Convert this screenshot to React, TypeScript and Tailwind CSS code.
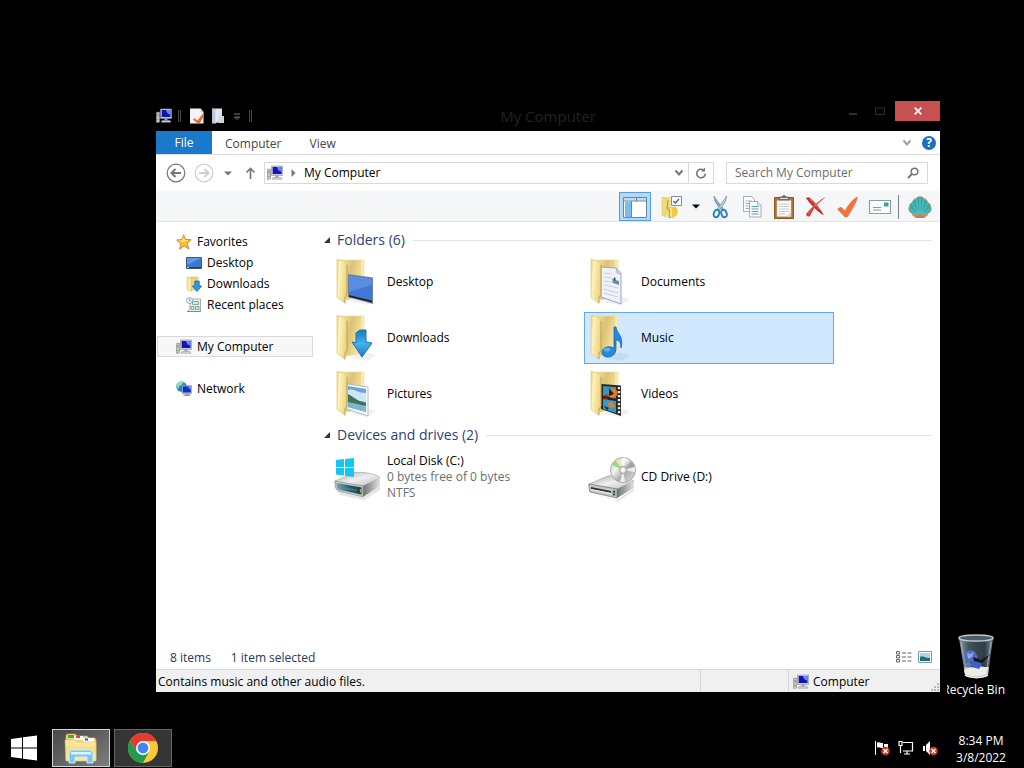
import React from "react";

type IconProps = { className?: string };

function ComputerIcon({ className }: IconProps) {
  return (
    <svg viewBox="0 0 16 16" className={className} aria-hidden="true">
      <path d="M0.5 4.5 3.5 4v10l-3 .5z" fill="#c9cbb8" stroke="#8d9092" strokeWidth=".7" />
      <path d="M1 6.5h2M1 8h2" stroke="#777" strokeWidth=".6" />
      <circle cx="2" cy="11.5" r=".7" fill="#54b23c" />
      <path d="M4.500 1h11v9.500h-11z" fill="#c3cbdc" stroke="#8890a8" strokeWidth=".6" />
      <path d="M5.700 2h8.800v7H5.700z" fill="#1414b4" />
      <path d="M10 2h4.500v4.500C12 6.500 10.500 4.500 10 2z" fill="#6d84f2" />
      <path d="M8.500 10.500h3v2h-3z" fill="#9aa0aa" />
      <path d="M6 12.500h8l1 1.700H5z" fill="#d5d9df" stroke="#868c96" strokeWidth=".5" />
    </svg>
  );
}

function NetworkIcon({ className }: IconProps) {
  return (
    <svg viewBox="0 0 16 16" className={className} aria-hidden="true">
      <circle cx="5.500" cy="5.500" r="5.200" fill="#2a86b8" />
      <path d="M2 2.500c2-2 4-2 5-1L6 4 3.500 5 2 8C0 6 .5 4 2 2.500zM7 4l3 1-1 3-3-1z" fill="#7ee0b4" />
      <path d="M1 3.500C3 .5 7 .5 9 2" stroke="#c4f0f4" fill="none" strokeWidth=".8" />
      <path d="M6 4.500h9.700v8H6z" fill="#b8c4d8" stroke="#667" strokeWidth=".4" />
      <path d="M6.800 5.300h8v6.200h-8z" fill="#1230bc" />
      <path d="M11 5.300h3.800V9z" fill="#6698f6" />
      <path d="M9.500 12.500h3v1h2V15h-7v-1.500h2z" fill="#9098a2" />
    </svg>
  );
}

function StarIcon({ className }: IconProps) {
  return (
    <svg viewBox="0 0 16 16" className={className} aria-hidden="true">
      <path d="m7.600.8 2 4.600 5.600.300-4.100 3.800 1.900 5.500-4.800-3-4.600 3.200 1.200-5.600L.6 6.100l5.200-.7z" fill="#ffc02e" stroke="#d88a39" strokeWidth="1" strokeLinejoin="round" />
      <path d="m7.600 2.800 1.200 3.300 3.700.2L6 8.200 2.800 6.800l3.500-.6z" fill="#ffe77a" />
    </svg>
  );
}

function MiniDesktopIcon({ className }: IconProps) {
  return (
    <svg viewBox="0 0 16 16" className={className} aria-hidden="true">
      <path d="M.5 2.500h15v11H.5z" fill="#3b78cf" stroke="#42566e" />
      <path d="M1 3h14L1 10z" fill="#75aaf0" opacity=".65" />
      <path d="M1 12h14v1H1z" fill="#234069" />
      <path d="M1 12h2v1H1z" fill="#9fd1ff" />
    </svg>
  );
}

function MiniDownloadsIcon({ className }: IconProps) {
  return (
    <svg viewBox="0 0 16 16" className={className} aria-hidden="true">
      <path d="M4 1h8v13H4z" fill="#edd580" stroke="#d8bd60" strokeWidth=".6" />
      <path d="M1 .8 5.500 2.500v13L1 13.500z" fill="#f9e9a4" stroke="#d6bc62" strokeWidth=".6" />
      <path d="M8.800 5h4.400v5h2.500L11 15.500 6.300 10h2.500z" fill="#2d9be0" stroke="#1668a8" strokeWidth=".8" />
    </svg>
  );
}

function RecentIcon({ className }: IconProps) {
  return (
    <svg viewBox="0 0 16 16" className={className} aria-hidden="true">
      <path d="M4 2h10.500v12.500H1.500L4 12z" fill="#eef3f3" stroke="#8f9a9c" strokeWidth=".8" />
      <path d="M6.500 4.500h6v3h-6zM5 9.500h3v3H5zM9.500 9.500H13v3H9.500z" fill="#d3ebe5" stroke="#69988f" strokeWidth=".8" />
      <circle cx="3.500" cy="3.500" r="3" fill="#f5f8fa" stroke="#8a979f" strokeWidth=".8" />
      <path d="M3.500 1.800v2h1.500" fill="none" stroke="#59666e" strokeWidth=".7" />
      <path d="M1 14.500h14" stroke="#7f8789" />
    </svg>
  );
}

type FolderKind = "desktop" | "documents" | "downloads" | "music" | "pictures" | "videos";

function FolderContents({ kind }: { kind: FolderKind }) {
  switch (kind) {
    case "desktop":
      return (
        <g>
          <path d="m14 16 25 3.500V46L14 39z" fill="#6e8298" />
          <path d="m15 17.500 23 3.200V42L15 36.500z" fill="#3f78d8" />
          <path d="m15 17.500 23 3.200v6L15 34z" fill="#6fa3f0" opacity=".5" />
          <path d="m15 37 23 5.500v2L15 39z" fill="#1b2736" />
        </g>
      );
    case "documents":
      return (
        <g>
          <path d="m13 9 15 1 5 5v31l-20-7z" fill="#f0f2fb" stroke="#8f9cb2" strokeWidth=".9" />
          <path d="m28 10 1 5 4 1" fill="#d4ddec" stroke="#9aa8bf" strokeWidth=".8" />
          <path d="m16 15 8 1M16 19l8 1M16 23l14 2M16 27l14 3M16 31l14 4M16 35l14 4" stroke="#cfc7e2" strokeWidth="1" />
          <path d="m24 21 7 2v4l-6-2z" fill="#5e93a5" />
          <path d="m25 21 2-2 1 4z" fill="#334e7c" />
        </g>
      );
    case "downloads":
      return (
        <path d="m22 19 4-3h6v12l6 1-10 14-10-15 4 1z" fill="url(#arrowBlue)" stroke="#1e6fab" strokeWidth="1" strokeLinejoin="round" />
      );
    case "music":
      return (
        <g fill="#2589df" stroke="#1761a8" strokeWidth=".8">
          <path d="M26 13h2c1 7 8 9 5 21 0-6-2-8-5-8v9c0 5-4 8-8 8s-6-2-6-5 4-6 9-5l3 1z" />
          <ellipse cx="19" cy="35.500" rx="3.500" ry="2" fill="#6ac1fa" stroke="none" opacity=".7" />
        </g>
      );
    case "pictures":
      return (
        <g>
          <path d="m13 14 21 3v29l-21-7z" fill="#f6f9fa" stroke="#a9b7bf" strokeWidth=".9" />
          <path d="m14 16 18 3v23l-18-5z" fill="#6ba5da" />
          <path d="M14 20c6-2 8 3 18 3v9l-18-3z" fill="#cfe6f5" />
          <path d="M14 24c5 2 8 7 18 9v3l-18-3z" fill="#3f7358" />
          <path d="m14 32 18 4v6l-18-5z" fill="#7ab7d3" />
        </g>
      );
    case "videos":
      return (
        <g>
          <path d="m13 14 20 1.500V46l-20-7z" fill="#252525" />
          <path d="m15 16 13 1v11.500L15 27zM15 29l13 2v12l-13-4z" fill="#3298ca" />
          <circle cx="25" cy="23" r="4.500" fill="#e57b22" />
          <circle cx="18" cy="27" r="2.800" fill="#ba392d" />
          <path d="m21 18 5 6-5 2zM15 26l7 1 1 2-8-1z" fill="#351c18" />
          <path d="m19 34 5-3 3 6-5 1z" fill="#df8126" />
          <path d="m16 36 5 2-2 2z" fill="#20201f" />
          <path d="M31 17v28" stroke="#e6e9e5" strokeWidth="2.400" strokeDasharray="2.200 1.800" />
        </g>
      );
  }
}

function FolderIcon({ kind }: { kind: FolderKind }) {
  return (
    <svg viewBox="0 0 48 48" className="size-12 shrink-0" aria-hidden="true">
      <path d="m26 37 16 4-8 6-18-3z" fill="#000" opacity=".06" />
      <path d="M5 2h25v37l-18 3z" fill="url(#folderBack)" stroke="#eadba2" strokeWidth=".7" />
      <path d="M27 2h3v37h-3z" fill="#fff4bd" opacity=".5" />
      <FolderContents kind={kind} />
      <path d="M3 1.500c2 0 9 2.500 10 4.500v30l-2 3v6.500L3 39z" fill="url(#folderFront)" stroke="#e2cb80" strokeWidth=".8" />
      <path d="M13 7v29l-2 3v6" fill="none" stroke="#a48846" strokeWidth=".9" opacity=".7" />
    </svg>
  );
}

function SharedGradients() {
  return (
    <svg className="absolute size-0" aria-hidden="true">
      <defs>
        <linearGradient id="folderBack" x1="0" x2="1" y1="0" y2=".4">
          <stop offset="0" stopColor="#f8edb8" />
          <stop offset=".5" stopColor="#dcc272" />
          <stop offset="1" stopColor="#f7e9ac" />
        </linearGradient>
        <linearGradient id="folderFront" x1="0" x2="1" y1="0" y2=".3">
          <stop offset="0" stopColor="#e9cf7c" />
          <stop offset=".3" stopColor="#fdf2bd" />
          <stop offset="1" stopColor="#eed47f" />
        </linearGradient>
        <linearGradient id="arrowBlue" x1="0" x2="0" y1="0" y2="1">
          <stop offset="0" stopColor="#1c75b8" />
          <stop offset=".5" stopColor="#43b2ef" />
          <stop offset="1" stopColor="#1879c6" />
        </linearGradient>
        <linearGradient id="metalTop" x1="0" x2="1" y1="0" y2="1">
          <stop offset="0" stopColor="#a9abad" />
          <stop offset=".5" stopColor="#efefef" />
          <stop offset="1" stopColor="#b9bbbd" />
        </linearGradient>
        <linearGradient id="metalSide" x1="0" x2="1" y1="0" y2="0">
          <stop offset="0" stopColor="#707173" />
          <stop offset="1" stopColor="#e0e1e2" />
        </linearGradient>
        <linearGradient id="driveFace" x1="0" x2="1" y1="0" y2="0">
          <stop offset="0" stopColor="#8ba1ab" />
          <stop offset=".5" stopColor="#27606c" />
          <stop offset="1" stopColor="#2a3439" />
        </linearGradient>
        <linearGradient id="discShine" x1="0" x2="1" y1="0" y2="1">
          <stop offset="0" stopColor="#c8c8c8" />
          <stop offset=".35" stopColor="#f4f4f4" />
          <stop offset=".6" stopColor="#adadad" />
          <stop offset="1" stopColor="#e3e3e3" />
        </linearGradient>
        <linearGradient id="binGlass" x1="0" x2="1" y1="0" y2="0">
          <stop offset="0" stopColor="#a3b4bf" />
          <stop offset=".3" stopColor="#4d5e6a" />
          <stop offset=".75" stopColor="#384652" />
          <stop offset="1" stopColor="#94a6b3" />
        </linearGradient>
      </defs>
    </svg>
  );
}

function LocalDiskIcon() {
  return (
    <svg viewBox="0 0 48 48" className="size-12 shrink-0" aria-hidden="true">
      <path d="m5 39 24 6 17-12v4L30 47 6 42z" fill="#000" opacity=".1" />
      <path d="M1 28 21 19.500c5-1 21 1 25 5L30 33 1 30z" fill="url(#metalTop)" stroke="#999" strokeWidth=".6" />
      <path d="m29 33 17-8.500V33L29 44z" fill="url(#metalSide)" />
      <path d="m1 28 28 5v11L4 38c-3-2-3-6-3-10z" fill="#bfc3c5" stroke="#8f9496" strokeWidth=".7" />
      <path d="m2.500 30 25 4.500v7L5 36.500c-2-1-2.500-4-2.500-6.500z" fill="url(#driveFace)" />
      <path d="m4 33 19 3.500v2L5 35z" fill="#4b9db0" opacity=".5" />
      <path d="M26.500 36v3.500" stroke="#72d850" strokeWidth="1.300" />
      <path d="m2 7 8-1v8H2zM11 6l9-1v9h-9zM2 15h8v7.500l-8-1zM11 15h9v9l-9-1.300z" fill="#12c7f4" />
    </svg>
  );
}

function CdDriveIcon() {
  return (
    <svg viewBox="0 0 48 48" className="size-12 shrink-0" aria-hidden="true">
      <path d="m5 41 24 6 17-11v2L30 48z" fill="#000" opacity=".12" />
      <path d="M1 31 20 23c7-1 23 3 26 5L29 36 1 33z" fill="url(#metalTop)" stroke="#999" strokeWidth=".6" />
      <circle cx="35" cy="17" r="12.500" fill="url(#discShine)" stroke="#9c9c9c" strokeWidth=".8" />
      <path d="M35 17 24 12c0-2 2-3 4-4z" fill="#8fd65d" opacity=".85" />
      <path d="m35 17-7-9 4-2z" fill="#e3e7a1" opacity=".7" />
      <path d="m35 17-1-12 4-.5zM35 17l12-3v5zM35 17l2 12h-5z" fill="#fff" opacity=".75" />
      <path d="m35 17 8-9 3 5z" fill="#8f8f8f" opacity=".45" />
      <circle cx="35" cy="17" r="3.500" fill="#e8e8e8" stroke="#9c9c9c" />
      <circle cx="35" cy="17" r="1.500" fill="#fff" />
      <path d="m29 36 17-8v7L29 45z" fill="url(#metalSide)" />
      <path d="m1 31 28 5v9L2 39c-1-2-1-5-1-8z" fill="#c5c6c7" stroke="#777" strokeWidth=".8" />
      <path d="m3 34 20 4v2L3 36z" fill="#333" />
      <path d="m3 36.500 20 4" stroke="#f6f6f6" />
      <path d="M26 37.500v5" stroke="#275c2b" strokeWidth="2.500" />
      <path d="M26 39v2" stroke="#62d14d" strokeWidth="1.200" />
    </svg>
  );
}

function RecycleBinIcon() {
  return (
    <svg viewBox="0 0 40 48" className="h-12 w-10" aria-hidden="true">
      <path d="M3 5h34l-5 37c-4 4-19 4-23 0z" fill="url(#binGlass)" opacity=".85" />
      <path d="M8 34h25l-1 8c-4 4-19 4-23 0z" fill="#b9bdbc" />
      <path d="M8 37c6-4 9-1 13-3s7 1 11 0l-1 7c-7 3-16 3-22 0z" fill="#eeeee6" />
      <path d="m9 19 5-2 5 2 3 5-5 5-8-1-3-3z" fill="#526cbb" />
      <path d="m11 20 4 1 3-3-2 6-4 2z" fill="#8ea5e6" />
      <path d="m9 31 4-3 3 4-4 3z" fill="#6178c0" />
      <path d="m16 29 5-2 5 4-3 5-7-2z" fill="#3f5fd0" />
      <path d="m17 24 8 3 11-7-10 10-8-2z" fill="#101722" />
      <path d="M5 9 11 41M35 9l-5 32" stroke="#d5e2e8" strokeWidth="1" opacity=".5" />
      <ellipse cx="20" cy="5" rx="17" ry="3" fill="#4b5d69" stroke="#bac5cb" strokeWidth="1.500" />
      <path d="M9 42c5 3.500 18 3.500 23 0" stroke="#eee" strokeWidth="1.500" fill="none" />
    </svg>
  );
}

function Triangle({ className }: IconProps) {
  return (
    <svg viewBox="0 0 8 5" className={className} aria-hidden="true">
      <path d="M0 .5h8L4 4.500z" fill="currentColor" />
    </svg>
  );
}

function Chevron({ className }: IconProps) {
  return (
    <svg viewBox="0 0 10 8" className={className} aria-hidden="true">
      <path d="m1.500 1.500 3.500 4 3.500-4" fill="none" stroke="currentColor" strokeWidth="2" />
    </svg>
  );
}

function CircleArrow({ flip, className }: { flip?: boolean; className?: string }) {
  return (
    <svg viewBox="0 0 20 20" className={className} aria-hidden="true">
      <circle cx="10" cy="10" r="8.800" fill="none" stroke="currentColor" strokeWidth="1.200" />
      <path d={flip ? "M5 10h9M10.500 6 14.500 10l-4 4" : "M15 10H6M9.500 6 5.500 10l4 4"} fill="none" stroke="currentColor" strokeWidth="2" />
    </svg>
  );
}

function TitleBar() {
  return (
    <header className="relative flex h-[30px] shrink-0 items-center justify-between">
      <div className="flex items-center">
        <ComputerIcon className="size-4" />
        <span className="ml-1.5 h-3 w-[3px] border-x border-[#4b4b4b]" />
        <button aria-label="Properties" className="ml-2">
          <svg viewBox="0 0 16 16" className="size-4">
            <path d="M1 .5h10.500L14.500 4v11.500H1z" fill="#f4f4f6" />
            <path d="M11.500.5V4h3" fill="#c9cdd2" />
            <path d="m5 10 3.500 2.500L14 5.500l1 1.500-4 8H8L4 11.500z" fill="#e06c34" />
          </svg>
        </button>
        <button aria-label="New folder" className="ml-1.5">
          <svg viewBox="0 0 16 16" className="size-4">
            <path d="M1 .5h10v14H1z" fill="#dde3ec" />
            <path d="m1 .5 4 1v14H1z" fill="#bcc8d8" />
            <path d="M9.500 8H13v7H7v-3z" fill="#cdd5e0" />
            <path d="M5 2v13" stroke="#f6f8fb" />
          </svg>
        </button>
        <button aria-label="Customize Quick Access Toolbar" className="ml-1.5">
          <svg viewBox="0 0 8 10" className="h-2.5 w-2">
            <path d="M1 3h6M1.500 6h5L4 8.500z" fill="none" stroke="#888" strokeWidth=".9" />
          </svg>
        </button>
        <span className="ml-2 h-3 w-[3px] border-x border-[#444444]" />
      </div>
      <h1 className="absolute inset-x-0 top-1 mx-auto w-fit text-[15px] leading-[22px] text-[#222222]">My Computer</h1>
      <div className="flex h-5 self-start text-[#303030]">
        <button aria-label="Minimize" className="flex w-6 items-center justify-center">
          <svg viewBox="0 0 8 8" className="size-2"><path d="M0 7h8" stroke="currentColor" strokeWidth="2" /></svg>
        </button>
        <button aria-label="Maximize" className="flex w-[30px] items-center justify-center">
          <svg viewBox="0 0 10 8" className="h-2 w-2.5"><path d="M.5 1h9v6.500h-9z" fill="none" stroke="currentColor" /></svg>
        </button>
        <button aria-label="Close" className="flex w-[45px] items-center justify-center bg-[#c75050]">
          <svg viewBox="0 0 8 8" className="size-2"><path d="m.7.700 6.600 6.600M7.300.700.7 7.300" stroke="#fff" strokeWidth="1.700" /></svg>
        </button>
      </div>
    </header>
  );
}

function RibbonTabs() {
  return (
    <nav className="flex h-6 shrink-0 items-center border-b border-[#dadbdc] bg-white text-[#444444]">
      <button className="h-full w-14 bg-[#1979ca] text-white">File</button>
      <button className="ml-[13px] pt-0.5">Computer</button>
      <button className="ml-7 pt-0.5">View</button>
      <button aria-label="Expand the Ribbon" className="ml-auto text-[#a0a0a0]">
        <Chevron className="h-2 w-2.5" />
      </button>
      <button aria-label="Help" className="mr-1 ml-2.5 flex size-[14px] items-center justify-center rounded-full bg-[#1b6fc4] text-[12px] leading-none font-bold text-white">?</button>
    </nav>
  );
}

function AddressRow() {
  return (
    <div className="flex h-9 shrink-0 items-center bg-white pr-3 pl-2.5">
      <button aria-label="Back"><CircleArrow className="size-5 text-[#777777]" /></button>
      <button aria-label="Forward" className="ml-2"><CircleArrow flip className="size-5 text-[#cfcfcf]" /></button>
      <button aria-label="Recent locations" className="ml-2.5 text-[#777777]"><Triangle className="h-[5px] w-2" /></button>
      <button aria-label="Up" className="ml-3">
        <svg viewBox="0 0 12 14" className="h-3.5 w-3"><path d="M6.500 13V2.500M2.500 6.500l4-4 4 4" fill="none" stroke="#777" strokeWidth="1.700" /></svg>
      </button>
      <div className="ml-2 flex h-[22px] flex-1 items-center border border-[#d9d9d9] pl-0.5">
        <ComputerIcon className="size-4" />
        <svg viewBox="0 0 5 8" className="ml-2 h-2 w-[5px]" aria-hidden="true"><path d="M.5 0v8L4.500 4z" fill="#777" /></svg>
        <button className="ml-2 text-black">My Computer</button>
        <button aria-label="Previous locations" className="mr-1 ml-auto text-[#777777]"><Chevron className="h-2 w-2.5" /></button>
        <button aria-label="Refresh" className="flex h-full w-[25px] items-center justify-center border-l border-[#d9d9d9]">
          <svg viewBox="0 0 12 12" className="size-3"><path d="M8.500 3A4.300 4.300 0 1 0 10.300 6.500" fill="none" stroke="#777" strokeWidth="1.600" /><path d="M6 4.500h4V.5z" fill="#777" /></svg>
        </button>
      </div>
      <label className="ml-3 flex h-[22px] w-[202px] items-center border border-[#d9d9d9] px-2">
        <input aria-label="Search My Computer" placeholder="Search My Computer" className="min-w-0 flex-1 bg-transparent outline-none placeholder:text-[#6d6d6d]" />
        <svg viewBox="0 0 12 12" className="size-3" aria-hidden="true"><circle cx="7.500" cy="4.500" r="3.300" fill="none" stroke="#777" strokeWidth="1.500" /><path d="M5 7 1 11" stroke="#777" strokeWidth="2" /></svg>
      </label>
    </div>
  );
}

const tools: { label: string; art: React.ReactNode }[] = [
  {
    label: "Cut",
    art: (
      <g>
        <path d="M6 1c0 5 3 9 7.500 14l1.500-1.500C12 9 8 5 6 1z" fill="#89a9bf" stroke="#5b7f9b" strokeWidth=".6" />
        <path d="M18.500 1c0 5-3 9-7.500 14l-1.500-1.500C12.500 9 16.500 5 18.500 1z" fill="#b9cfdd" stroke="#5b7f9b" strokeWidth=".6" />
        <ellipse cx="8.500" cy="18.500" rx="2.600" ry="3.800" fill="none" stroke="#2583b7" strokeWidth="1.900" transform="rotate(20 8.500 18.500)" />
        <ellipse cx="16" cy="18.500" rx="2.600" ry="3.800" fill="none" stroke="#2583b7" strokeWidth="1.900" transform="rotate(-20 16 18.500)" />
      </g>
    ),
  },
  {
    label: "Copy",
    art: (
      <g fill="#fbfcfd" stroke="#9aa6b0" strokeWidth=".9">
        <path d="M3.500 1.500h8l3 3v12h-11z" />
        <path d="M5.500 6h6M5.500 8.500h6M5.500 11h6M5.500 13.500h6" />
        <path d="M9.500 6.500h8l3.500 3.500v12H9.500z" />
        <path d="M17.500 6.500V10H21" />
        <path d="M11.500 11.500h7M11.500 14h7M11.500 16.500h7M11.500 19h7" stroke="#4b9ab5" />
      </g>
    ),
  },
  {
    label: "Paste",
    art: (
      <g>
        <path d="M2.500 2.500h19v21h-19z" fill="#b87333" stroke="#8e5527" />
        <path d="M5 5.500h14v16H5z" fill="#fcfcfa" stroke="#d9c6a9" strokeWidth=".6" />
        <path d="M7 9h10M7 11.500h10M7 14h10M7 16.500h10M7 19h6" stroke="#b5bdc2" strokeWidth=".8" />
        <path d="M14 21.500h5v-5z" fill="#d4dade" />
        <path d="M7 2h3c0-2 4-2 4 0h3v3H7z" fill="#6f787d" stroke="#4f575b" strokeWidth=".6" />
        <path d="M8 3.500h8" stroke="#e0e4e6" />
      </g>
    ),
  },
  {
    label: "Delete",
    art: (
      <g>
        <path d="M2 3c2-1 3-1 4 0 6 5 11 12 14 17l-2.500-1C12 15 6 9 2 3z" fill="#c22e24" />
        <path d="M22 2C15 5 7 13 2 19c1 3 3 3 4 2 3-7 9-14 16-19z" fill="#d93a2b" />
        <path d="M5 4c5 4 8 7 10 11M18 5C12 9 7 14 4 19" stroke="#f08873" fill="none" strokeWidth=".7" />
      </g>
    ),
  },
  {
    label: "Properties",
    art: <path d="M1.500 14 5 12l4 4C12 10 16 5 21 2h.5c-1 6-6 13-9 18.500-1.500 2-4 2-5 0z" fill="#f0743c" stroke="#df6d3b" strokeWidth=".5" />,
  },
  {
    label: "E-mail",
    art: (
      <g>
        <path d="M1.500 5.500h21v13h-21z" fill="#fbfcfc" stroke="#909ba2" strokeWidth="1.200" />
        <path d="M16 7.500h4.500v4H16z" fill="#3ca2a5" />
        <path d="M5 12.500h8M5 15h8" stroke="#8a969c" />
      </g>
    ),
  },
];

function Toolbar() {
  return (
    <div className="flex h-[31px] shrink-0 items-end justify-end border-b border-[#e2e5e8] bg-[#f5f6f7] pr-1" role="toolbar">
      <button aria-label="Navigation pane" aria-pressed="true" className="mr-[5px] flex h-[29px] w-8 items-center justify-center border border-[#569de5] bg-[#b5d8f7]">
        <svg viewBox="0 0 24 24" className="size-6">
          <path d="M.5 2.500h23v20H.5z" fill="#fff" stroke="#6385a6" />
          <path d="M1 3h22v2.500H1z" fill="#c4d9ec" />
          <path d="M1 6h22" stroke="#6385a6" />
          <path d="M2 7h6v15H2z" fill="#7bbcee" />
          <path d="M8.500 6v16M13.500 2.500v4" stroke="#6385a6" />
        </svg>
      </button>
      <button aria-label="Folder options" className="flex h-[29px] w-8 items-center justify-center">
        <svg viewBox="0 0 24 24" className="size-6">
          <path d="M3 2h8v18l-4 2z" fill="#f2df93" />
          <path d="m2 2 6 2v9l-2 2v7l-4-2z" fill="#f1da77" stroke="#d8bd60" strokeWidth=".5" />
          <path d="M8 12h8c2 1 2 7 1 8l-4 3H8z" fill="#ecca4c" />
          <path d="m8 5-1 9 3 2v7" stroke="#b59434" fill="none" />
          <path d="M11 13v9" stroke="#fbedaa" strokeWidth="1.500" />
          <path d="M11.500 1.500h10v9h-10z" fill="#f9fafc" stroke="#7b8ea4" />
          <path d="m13.500 6 2 2 3.500-4" fill="none" stroke="#42658e" strokeWidth="1.300" />
        </svg>
      </button>
      <button aria-label="More folder options" className="flex h-[29px] w-4 items-center justify-center text-black"><Triangle className="h-[5px] w-2" /></button>
      {tools.map((tool) => (
        <button key={tool.label} aria-label={tool.label} className="flex h-[29px] w-8 items-center justify-center">
          <svg viewBox="0 0 24 24" className="size-6">{tool.art}</svg>
        </button>
      ))}
      <span className="mb-0.5 ml-0.5 h-6 w-px bg-[#777d83]" />
      <button aria-label="Shell settings" className="ml-[5px] flex h-[29px] w-8 items-center justify-center">
        <svg viewBox="0 0 24 24" className="size-6">
          <path d="M5 16h14l1 4-4 3H8l-4-3z" fill="#c98a5c" />
          <path d="M12 1.500c2 0 3 1 4 2 2 0 3 2 4 4 2 1 3 3 3 5 1 3-1 5-3 6l-5 1-3 2-3-2-5-1c-2-1-4-3-3-6 0-2 1-4 3-5 1-2 2-4 4-4 1-1 2-2 4-2z" fill="#35a9ab" stroke="#d6a272" strokeWidth=".9" />
          <path d="M12 20V3M11 19 8 4M13 19l3-15M10 19 4 8M14 19l6-11M9 19l-7-5M15 19l7-5" stroke="#68c8c4" strokeWidth=".8" />
          <path d="M7 20c2 1 8 1 10 0l-1 3H8z" fill="#cf7a50" />
        </svg>
      </button>
    </div>
  );
}

function Sidebar() {
  return (
    <aside className="w-[158px] shrink-0 pt-[9px] pl-px">
      <ul className="text-black">
        <li><a href="#favorites" className="flex h-[21px] items-center gap-[5px] pl-[19px]"><StarIcon className="size-4" />Favorites</a></li>
        <li><a href="#desktop" className="flex h-[21px] items-center gap-[5px] pl-[29px]"><MiniDesktopIcon className="size-4" />Desktop</a></li>
        <li><a href="#downloads" className="flex h-[21px] items-center gap-[5px] pl-[29px]"><MiniDownloadsIcon className="size-4" />Downloads</a></li>
        <li><a href="#recent" className="flex h-[21px] items-center gap-[5px] pl-[29px]"><RecentIcon className="size-4" />Recent places</a></li>
        <li className="mt-[21px]"><a href="#computer" aria-current="page" className="flex h-[21px] w-[156px] items-center gap-[5px] border border-[#dadada] bg-[#f7f7f7] pl-[18px]"><ComputerIcon className="size-4" />My Computer</a></li>
        <li className="mt-[21px]"><a href="#network" className="flex h-[21px] items-center gap-[5px] pl-[19px]"><NetworkIcon className="size-4" />Network</a></li>
      </ul>
    </aside>
  );
}

function GroupHeader({ title }: { title: string }) {
  return (
    <h2 className="mb-1.5 flex h-5 items-center text-[14px] leading-5 text-[#2f4178]">
      <svg viewBox="0 0 8 8" className="mr-1.5 size-2" aria-hidden="true"><path d="M7 1v6H1z" fill="#333" /></svg>
      {title}
      <span className="ml-2 h-px flex-1 bg-[#e2e3ea]" />
    </h2>
  );
}

function Tile({ icon, name, details, selected }: { icon: React.ReactNode; name: string; details?: string[]; selected?: boolean }) {
  return (
    <li>
      <button
        aria-pressed={selected ? true : false}
        className={
          selected
            ? "flex h-[52px] w-full items-center gap-[5px] border border-[#66a7e8] bg-[#d1e8ff] pl-[3px] text-left leading-4"
            : "flex h-[52px] w-full items-center gap-[5px] border border-transparent pl-[3px] text-left leading-4"
        }
      >
        {icon}
        <span className="flex flex-col text-black">
          {name}
          {details?.map((line) => <span key={line} className="text-[#6d6d6d]">{line}</span>)}
        </span>
      </button>
    </li>
  );
}

const folders: { name: string; kind: FolderKind; selected?: boolean }[] = [
  { name: "Desktop", kind: "desktop" },
  { name: "Documents", kind: "documents" },
  { name: "Downloads", kind: "downloads" },
  { name: "Music", kind: "music", selected: true },
  { name: "Pictures", kind: "pictures" },
  { name: "Videos", kind: "videos" },
];

function FilePane() {
  return (
    <main className="min-w-0 flex-1 overflow-hidden pt-2 pr-2 pl-[9px]">
      <section>
        <GroupHeader title="Folders (6)" />
        <ul className="ml-[7px] grid grid-cols-[repeat(auto-fill,250px)] gap-1">
          {folders.map((folder) => (
            <Tile key={folder.name} name={folder.name} selected={folder.selected} icon={<FolderIcon kind={folder.kind} />} />
          ))}
        </ul>
      </section>
      <section className="mt-[5px]">
        <GroupHeader title="Devices and drives (2)" />
        <ul className="ml-[7px] grid grid-cols-[repeat(auto-fill,250px)] gap-1">
          <Tile name="Local Disk (C:)" details={["0 bytes free of 0 bytes", "NTFS"]} icon={<LocalDiskIcon />} />
          <Tile name="CD Drive (D:)" icon={<CdDriveIcon />} />
        </ul>
      </section>
    </main>
  );
}

function StatusBars() {
  return (
    <footer className="shrink-0 bg-white">
      <div className="flex h-6 items-center pr-2 pl-3.5 text-[#1e395b]">
        <span className="pt-0.5">8 items</span>
        <span className="ml-5 pt-0.5">1 item selected</span>
        <button aria-label="Details view" className="ml-auto">
          <svg viewBox="0 0 16 12" className="h-3 w-4">
            <path d="M.5.500h3v2.500h-3zM.5 4.500h3V7h-3zM.5 8.500h3V11h-3z" fill="none" stroke="#666" />
            <path d="M6 2h4M11.500 2h4M6 6h4M11.500 6h4M6 10h4M11.500 10h4" stroke="#666" />
          </svg>
        </button>
        <button aria-label="Large icons view" className="ml-1.5">
          <svg viewBox="0 0 14 12" className="h-3 w-3.5">
            <path d="M.5.500h13v11H.5z" fill="#fff" stroke="#6ea1b4" />
            <path d="M2 2h10v8H2z" fill="#a9d8ec" />
            <path d="M2 6c2-2 4 1 10 1v3H2z" fill="#2b6a73" />
          </svg>
        </button>
      </div>
      <div className="flex h-[23px] items-center border-t border-[#d7d7d7] bg-[#f0f0f0] text-black">
        <span className="flex-1 pt-0.5 pl-0.5">Contains music and other audio files.</span>
        <span className="h-full w-[88px] border-l border-[#d7d7d7]" />
        <span className="flex h-full w-[152px] items-center justify-between border-l border-[#d7d7d7] pl-1">
          <span className="flex items-center gap-1 pt-0.5"><ComputerIcon className="size-4" />Computer</span>
          <svg viewBox="0 0 10 10" className="size-2.5 self-end" aria-hidden="true">
            <path d="M7 1h2v2H7zM4 4h2v2H4zM7 4h2v2H7zM1 7h2v2H1zM4 7h2v2H4zM7 7h2v2H7z" fill="#b9b9b9" />
          </svg>
        </span>
      </div>
    </footer>
  );
}

function ErrorBadge() {
  return (
    <g>
      <circle cx="11.500" cy="11" r="4.300" fill="#d83429" />
      <path d="m9.500 9 4 4M13.500 9l-4 4" stroke="#fff" strokeWidth="1.400" />
    </g>
  );
}

function Taskbar() {
  return (
    <footer className="flex h-10 shrink-0 items-center bg-black">
      <button aria-label="Start" className="flex h-full w-12 items-center justify-center">
        <svg viewBox="0 0 26 26" className="size-[26px]"><path d="m0 4 11-1.500v10H0zM12 2.300 26 .500v12H12zM0 13.500h11v10L0 22zM12 13.500h14v12l-14-1.800z" fill="#fff" /></svg>
      </button>
      <button aria-label="File Explorer" className="ml-1 flex h-[38px] w-[58px] items-center justify-center border border-[#d5d5d5] bg-linear-to-br from-[#494949] to-[#7d7d7d]">
        <svg viewBox="0 0 34 32" className="h-8 w-[34px]">
          <path d="M2 4c0-2 2-2 4-2h5l2 2h10l2 2h6l1 2v20H2z" fill="#efd374" stroke="#d8b651" strokeWidth=".6" />
          <path d="M4 3h6v3H4z" fill="#49a550" />
          <path d="M10 4h9v4h-9zM19 6h11v4H19z" fill="#fafafa" />
          <path d="M12 4h4v2h-4z" fill="#d9472d" />
          <path d="M21 6.500h3v2h-3z" fill="#3a5ba5" />
          <path d="M1 8h10l3 2h18v19H2z" fill="#f8e7a0" stroke="#dfc365" strokeWidth=".6" />
          <path d="M2 14h30v8H2z" fill="#f3d97b" opacity=".55" />
          <path d="M7 18h20l2 3v10h-6v-6H11v6H5V21z" fill="#7cc6ee" stroke="#c8efff" />
          <path d="M7 20h20v2.500H7z" fill="#d8f5ff" />
        </svg>
      </button>
      <button aria-label="Google Chrome" className="ml-1 flex h-[38px] w-[58px] items-center justify-center border border-[#666666] bg-[#353535]">
        <svg viewBox="0 0 30 30" className="size-[30px]">
          <circle cx="15" cy="15" r="15" fill="#fbc934" />
          <path d="M15 8h13.300A15 15 0 0 0 2 7.500l7 11z" fill="#e33b2e" />
          <path d="M2 7.500a15 15 0 0 0 13 22.500l6-11.500-6 3.500-6-3.500z" fill="#229a50" />
          <circle cx="15" cy="15" r="7" fill="#fff" />
          <circle cx="15" cy="15" r="5.400" fill="#4285f4" />
        </svg>
      </button>
      <div className="ml-auto flex items-center gap-2">
        <button aria-label="Action Center">
          <svg viewBox="0 0 16 16" className="size-4"><path d="M1.500 1v14" stroke="#fff" /><path d="M3 2.500c3-1 4 1 6 .5v5c-2 .5-3-1.500-6-.5zM10 4h4v4h-4z" fill="#fff" /><ErrorBadge /></svg>
        </button>
        <button aria-label="Network">
          <svg viewBox="0 0 16 16" className="size-4" fill="none" stroke="#fff" strokeWidth="1.200"><path d="M5 2.500h9.500V11H5M9 11v3M6 14h6M2.500 6v7" /><path d="M1 1.500h3v4H1z" /></svg>
        </button>
        <button aria-label="Volume">
          <svg viewBox="0 0 16 16" className="size-4"><path d="M1 6h2v5H1zM4 5l4-4v14l-4-4z" fill="#fff" /><ErrorBadge /></svg>
        </button>
      </div>
      <time dateTime="2022-03-08T20:34" className="mr-3 ml-3 flex w-[62px] flex-col pt-0.5 text-center leading-[17px] text-white">
        <span>8:34 PM</span>
        <span>3/8/2022</span>
      </time>
    </footer>
  );
}

export default function App() {
  return (
    <div className="relative flex min-h-screen flex-col overflow-hidden bg-black font-['Open_Sans','Noto_Sans',sans-serif] text-[12px] leading-4">
      <SharedGradients />
      <div className="flex flex-1 pt-[101px] pr-[84px] pb-9 pl-[156px]">
        <div className="flex min-w-0 flex-1 flex-col">
          <TitleBar />
          <RibbonTabs />
          <AddressRow />
          <Toolbar />
          <div className="flex flex-1 bg-white">
            <Sidebar />
            <FilePane />
          </div>
          <StatusBars />
        </div>
      </div>
      <button className="absolute right-[19px] bottom-[69px] flex w-[58px] flex-col items-center text-white">
        <RecycleBinIcon />
        <span className="flex w-full justify-end overflow-hidden leading-[18px] whitespace-nowrap">Recycle Bin</span>
      </button>
      <Taskbar />
    </div>
  );
}
